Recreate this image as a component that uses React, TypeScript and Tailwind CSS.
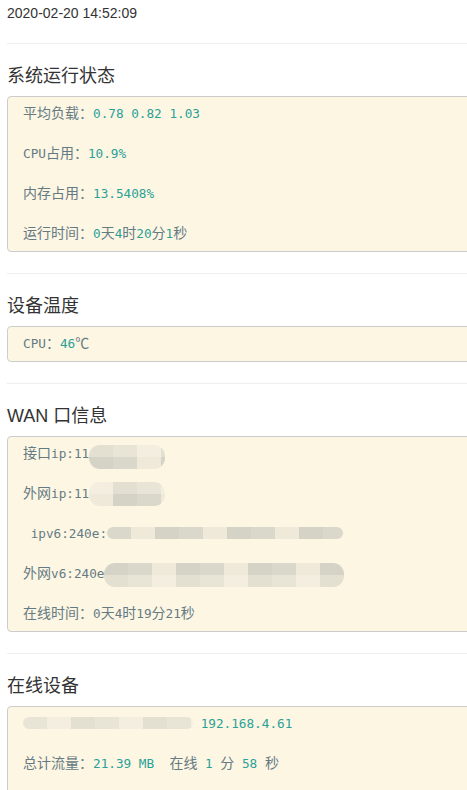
import React from 'react';

const CJK = /([\u3000-\u303f\u4e00-\u9fff\uff00-\uffef\u2103]+)/;

// splits a run into CJK (14px) and latin (narrow mono) pieces
const Run = ({ text, hl }: { text: string; hl?: boolean }) => {
  const pieces = text.split(CJK).filter(p => p.length > 0);
  return (
    <span className={hl ? 'text-[#2aa198]' : 'text-[#657b83]'}>
      {pieces.map((p, i) =>
        CJK.test(p) ? (
          <span key={i} className="text-[14px]">{p}</span>
        ) : (
          <span key={i} className="text-[12.7px]">{p}</span>
        )
      )}
    </span>
  );
};

const palette = [
  'bg-[#efe9d9]',
  'bg-[#e4e0d1]',
  'bg-[#dad8ca]',
  'bg-[#f3eedf]',
  'bg-[#d4d3c5]',
  'bg-[#e9e5d6]',
];

const Blur = ({ w, rows, top, seed = 0 }: { w: number; rows: number; top: number; seed?: number }) => {
  const cols = Math.ceil(w / 12);
  return (
    <span className="relative inline-block h-[20px] align-top" style={{ width: w }}>
      <span
        className="absolute left-0 flex flex-col overflow-hidden rounded-[11px]"
        style={{ top, width: w }}
      >
        {Array.from({ length: rows }).map((_, r) => (
          <span key={r} className="flex h-[12px]">
            {Array.from({ length: cols }).map((_, c) => (
              <span
                key={c}
                className={`h-[12px] w-[12px] shrink-0 ${palette[(c * 5 + r * 3 + seed + ((c * c) % 4)) % palette.length]}`}
              />
            ))}
          </span>
        ))}
      </span>
    </span>
  );
};

const Line = ({ children }: { children?: React.ReactNode }) => (
  <div className="h-[20px] leading-[20px] whitespace-pre">{children}</div>
);

const Gap = () => <div className="h-[20px]" />;

const Box = ({ children }: { children: React.ReactNode }) => (
  <div className="mt-[7px] -mr-4 rounded-[4px] border border-[#cccccc] bg-[#fdf6e3] pt-[6px] pb-[8px] pl-[15px] font-['DejaVu_Sans_Mono','Noto_Sans_CJK_SC',monospace]">
    {children}
  </div>
);

const Section = ({ title, children }: { title: string; children: React.ReactNode }) => (
  <div>
    <div className="mt-[21px] border-t border-[#eeeeee]" />
    <h2 className="mt-[19px] h-[26px] text-[18px] leading-[26px] font-normal text-[#333333]">{title}</h2>
    <Box>{children}</Box>
  </div>
);

export default function App() {
  return (
    <div className="min-h-screen w-full overflow-hidden bg-white pl-[7px] font-['Liberation_Sans','Noto_Sans_CJK_SC',sans-serif]">
      <div className="pt-[3px] h-[22px] text-[14px] leading-[20px] text-[#333333]">2020-02-20 14:52:09</div>

      <Section title="系统运行状态">
        <Line><Run text="平均负载：" /><Run text="0.78 0.82 1.03" hl /></Line>
        <Gap />
        <Line><Run text="CPU占用：" /><Run text="10.9%" hl /></Line>
        <Gap />
        <Line><Run text="内存占用：" /><Run text="13.5408%" hl /></Line>
        <Gap />
        <Line>
          <Run text="运行时间：" /><Run text="0" hl /><Run text="天" /><Run text="4" hl /><Run text="时" />
          <Run text="20" hl /><Run text="分" /><Run text="1" hl /><Run text="秒" />
        </Line>
      </Section>

      <Section title="设备温度">
        <Line><Run text="CPU：" /><Run text="46" hl /><Run text="℃" /></Line>
      </Section>

      <Section title="WAN 口信息">
        <Line><Run text="接口ip:11" /><Blur w={76} rows={2} top={2} seed={1} /></Line>
        <Gap />
        <Line><Run text="外网ip:11" /><Blur w={76} rows={2} top={-1} seed={3} /></Line>
        <Gap />
        <Line><Run text=" ipv6:240e:" /><Blur w={236} rows={1} top={4} seed={2} /></Line>
        <Gap />
        <Line><Run text="外网v6:240e" /><Blur w={240} rows={2} top={0} seed={4} /></Line>
        <Gap />
        <Line><Run text="在线时间：0天4时19分21秒" /></Line>
      </Section>

      <Section title="在线设备">
        <Line><Blur w={170} rows={1} top={4} seed={5} /><Run text=" " /><Run text="192.168.4.61" hl /></Line>
        <Gap />
        <Line>
          <Run text="总计流量：" /><Run text="21.39 MB" hl /><Run text="  在线 " /><Run text="1" hl />
          <Run text=" 分 " /><Run text="58" hl /><Run text=" 秒" />
        </Line>
        <Gap />
        <Gap />
      </Section>
    </div>
  );
}
